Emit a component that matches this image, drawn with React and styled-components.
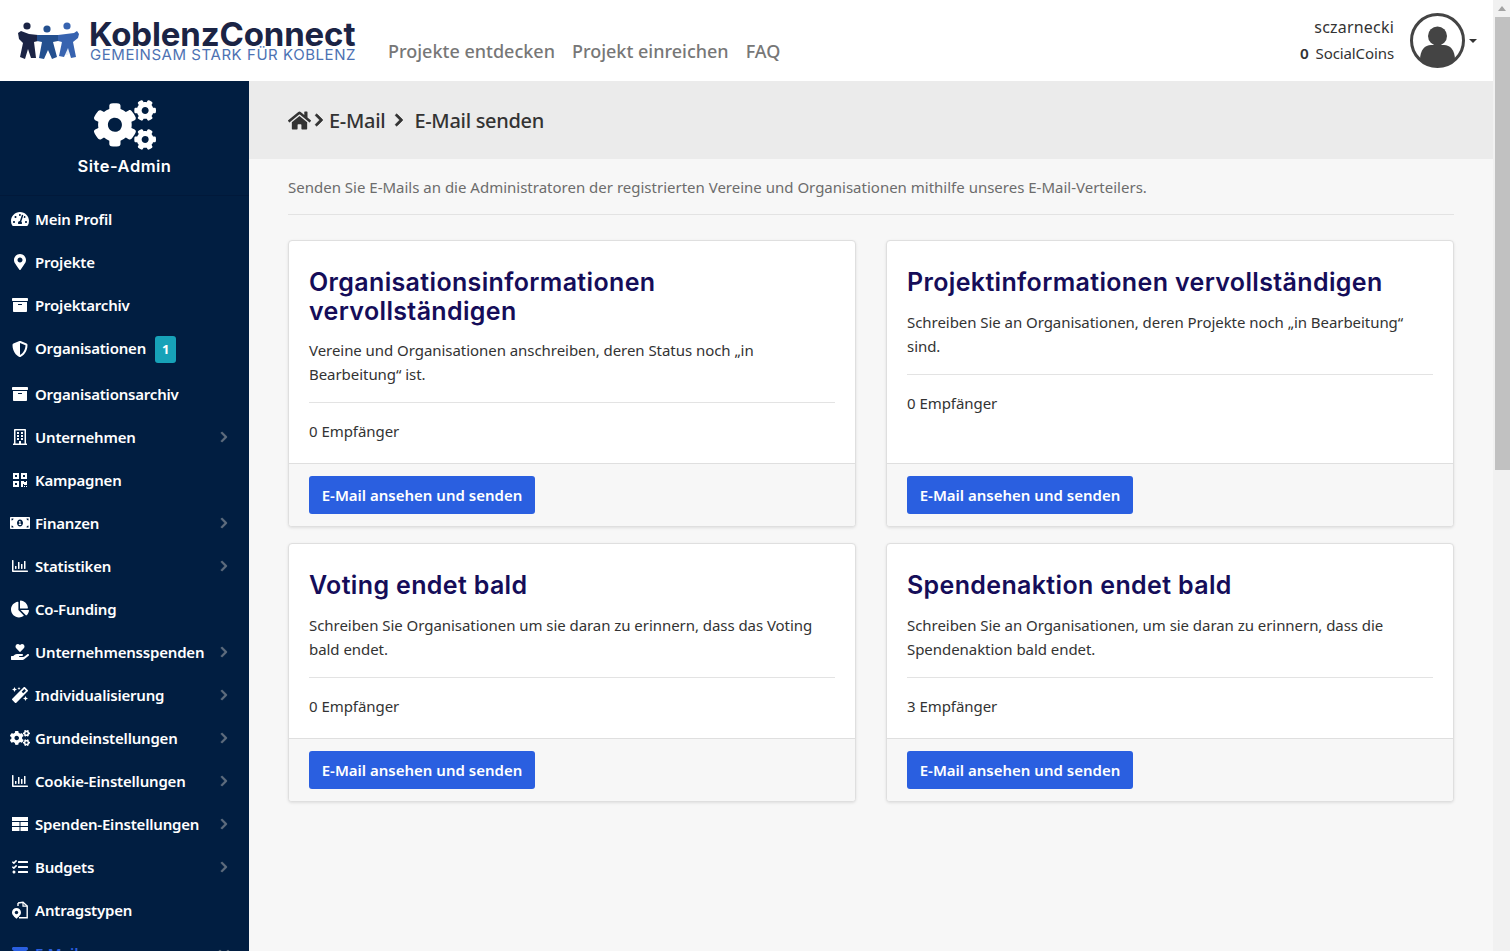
import styled, { createGlobalStyle } from 'styled-components';
import {
  FaArchive,
  FaChartPie,
  FaChevronDown,
  FaChevronRight,
  FaCogs,
  FaEnvelope,
  FaHandHoldingHeart,
  FaHome,
  FaMagic,
  FaMapMarkerAlt,
  FaMoneyBillAlt,
  FaQrcode,
  FaRegBuilding,
  FaRegChartBar,
  FaShieldAlt,
  FaTachometerAlt,
  FaTasks,
} from 'react-icons/fa';

const GlobalStyle = createGlobalStyle`
  html, body {
    margin: 0;
    padding: 0;
    height: 100%;
    overflow: hidden;
    background: #f7f7f7;
    font-family: "Noto Sans", "Open Sans", sans-serif;
  }
`;

const Page = styled.div`
  display: flex;
  width: 1510px;
  height: 951px;
  overflow: hidden;
`;

const Main = styled.div`
  flex: 1;
  min-width: 0;
  display: flex;
  flex-direction: column;
`;

const ScrollTrack = styled.div`
  width: 17px;
  flex-shrink: 0;
  background: #f1f1f1;
  display: flex;
  flex-direction: column;
  align-items: flex-end;
`;

const ScrollArrow = styled.div`
  width: 0;
  height: 0;
  align-self: center;
  margin: 6px 0 6px;
  border-left: 4px solid transparent;
  border-right: 4px solid transparent;
  border-bottom: 5px solid #a3a3a3;
`;

const ScrollThumb = styled.div`
  width: 15px;
  height: 453px;
  background: #c1c1c1;
`;

const Header = styled.header`
  height: 81px;
  flex-shrink: 0;
  background: #fff;
  display: flex;
  align-items: center;
  padding: 0 16px 0 17px;
  box-sizing: border-box;
`;

const LogoLink = styled.div`
  display: flex;
  align-items: center;
  gap: 10px;
  width: 371px;
  flex-shrink: 0;
  margin-top: -1px;
`;

const LogoText = styled.div`
  display: flex;
  flex-direction: column;
`;

const LogoName = styled.div`
  font-family: "Inter", sans-serif;
  font-weight: 700;
  font-size: 33px;
  line-height: 31px;
  letter-spacing: -0.15px;
  color: #1b2445;
`;

const LogoClaim = styled.div`
  font-family: "Inter", sans-serif;
  font-size: 15px;
  line-height: 12px;
  letter-spacing: 0.55px;
  white-space: nowrap;
  color: #4d72b3;
  margin: -1px 0 0 1px;
`;

const Nav = styled.nav`
  display: flex;
  gap: 17px;
  flex: 1;
  margin-top: 20px;
`;

const NavLink = styled.a`
  font-size: 18px;
  font-weight: 500;
  color: #777;
`;

const UserBox = styled.div`
  display: flex;
  align-items: center;
`;

const UserText = styled.div`
  text-align: right;
  font-size: 15px;
  line-height: 26px;
  letter-spacing: -0.1px;
  color: #333;
  margin: -1px 16px 0 0;
`;

const UserName = styled.div`
  font-size: 16px;
  letter-spacing: 0.2px;
`;

const Coins = styled.b`
  font-family: "Inter", sans-serif;
  font-weight: 700;
  font-size: 13px;
  margin-right: 3px;
`;

const Caret = styled.span`
  width: 0;
  height: 0;
  margin-left: 4px;
  border-left: 4px solid transparent;
  border-right: 4px solid transparent;
  border-top: 4px solid #333;
`;

const Body = styled.div`
  flex: 1;
  min-height: 0;
  display: flex;
`;

const Sidebar = styled.aside`
  width: 249px;
  flex-shrink: 0;
  background: #011e41;
  overflow: hidden;
`;

const SidebarHead = styled.div`
  height: 115px;
  box-sizing: border-box;
  border-bottom: 1px solid #01193a;
  padding-top: 13px;
  display: flex;
  flex-direction: column;
  align-items: center;
  color: #fff;
  font-size: 62px;
`;

const SidebarTitle = styled.div`
  font-family: "Inter", sans-serif;
  font-size: 16.5px;
  font-weight: 600;
  line-height: 22px;
  letter-spacing: 0.5px;
  margin-top: -1px;
`;

const Menu = styled.ul`
  list-style: none;
  margin: 0;
  padding: 1px 0 0;
`;

const MenuItem = styled.li`
  height: ${(props) => (props.$tall ? '46px' : '43px')};
  display: flex;
  align-items: center;
  padding: 0 19px 0 10px;
  font-size: 15px;
  font-weight: 600;
  letter-spacing: -0.2px;
  white-space: nowrap;
  color: ${(props) => (props.$active ? '#2a5fe0' : '#fff')};
`;

const MenuIcon = styled.span`
  width: 20px;
  margin-right: 5px;
  flex-shrink: 0;
  display: flex;
  justify-content: center;
  font-size: ${(props) => props.$size || 16}px;
`;

const MenuLabel = styled.span`
  flex: 1;
`;

const Badge = styled.span`
  display: inline-block;
  width: 21px;
  height: 27px;
  margin-left: 9px;
  border-radius: 3px;
  background: #17a2b8;
  color: #fff;
  font-size: 13px;
  font-weight: 700;
  line-height: 27px;
  text-align: center;
`;

const MenuArrow = styled.span`
  display: flex;
  color: #5f6d7e;
  font-size: 12px;

  svg {
    stroke: currentColor;
    stroke-width: 20;
  }
`;

const Content = styled.main`
  flex: 1;
  min-width: 0;
  background: #f7f7f7;
`;

const Breadcrumb = styled.div`
  height: 78px;
  box-sizing: border-box;
  padding: 0 39px;
  background: #ebebeb;
  display: flex;
  align-items: center;
  font-size: 20px;
  font-weight: 500;
  letter-spacing: -0.3px;
  color: #333;
`;

const CrumbArrow = styled.span`
  display: flex;
  font-size: 14px;
  margin: ${(props) => props.$margin};

  svg {
    stroke: currentColor;
    stroke-width: 30;
  }
`;

const Inner = styled.div`
  padding: 0 39px;
`;

const Intro = styled.p`
  margin: 0;
  padding: 17px 0 15px;
  border-bottom: 1px solid #e3e3e3;
  font-size: 15px;
  line-height: 23px;
  color: #6c6c6c;
`;

const CardGrid = styled.div`
  display: grid;
  grid-template-columns: 1fr 1fr;
  grid-template-rows: 287px 259px;
  column-gap: 30px;
  row-gap: 16px;
  margin-top: 25px;
`;

const Card = styled.section`
  display: flex;
  flex-direction: column;
  background: #fff;
  border: 1px solid #dfdfdf;
  border-radius: 4px;
  box-shadow: 0 1px 3px rgba(0, 0, 0, 0.1);
  overflow: hidden;
`;

const CardBody = styled.div`
  flex: 1;
  padding: 27px 20px 0;
`;

const CardTitle = styled.h3`
  margin: 0 0 12.8px;
  font-family: "Inter", sans-serif;
  font-size: 25px;
  font-weight: 600;
  line-height: 28.8px;
  letter-spacing: 0.35px;
  color: #150d59;
`;

const CardText = styled.p`
  margin: 0;
  font-size: 15px;
  line-height: 24px;
  letter-spacing: -0.05px;
  color: #333;
`;

const CardRule = styled.hr`
  margin: 16px 0;
  border: 0;
  border-top: 1px solid #e3e3e3;
`;

const CardFooter = styled.div`
  padding: 12px 20px;
  background: #f7f7f7;
  border-top: 1px solid #dfdfdf;
`;

const SendButton = styled.button`
  display: block;
  width: 226px;
  height: 38px;
  padding: 0;
  border: 0;
  border-radius: 3px;
  background: #2a5fe0;
  color: #fff;
  font-family: inherit;
  font-size: 15px;
  font-weight: 600;
`;

function LogoMark() {
  return (
    <svg width="62" height="40" viewBox="0 0 62 40">
      <path d="M44 21 L55 21 L51 35 L47 35 Z" fill="#e6eefa" />
      <g fill="#1b2445">
        <circle cx="10" cy="6" r="3.6" />
        <path d="M1 13 L4 11 L12 14 L21 15 L21 21 L17 22 L19 38 L14 38 L11 29 L8 39 L3 37 L6 23 L2 19 Z" />
      </g>
      <g fill="#24508f">
        <circle cx="30" cy="9" r="3.6" />
        <path d="M20 15 L41 15 L41 21 L36 22 L40 37 L35 39 L31 30 L27 39 L22 38 L25 22 L20 21 Z" />
      </g>
      <g fill="#3763b0">
        <circle cx="50" cy="6" r="3.6" />
        <path d="M41 15 L57 13 L60 11 L62 14 L61 18 L56 22 L59 37 L54 38 L51 28 L47 37 L42 36 L45 22 L41 21 Z" />
      </g>
    </svg>
  );
}

function AvatarIcon() {
  return (
    <svg width="55" height="55" viewBox="0 0 55 55">
      <circle cx="27.5" cy="27.5" r="26" fill="#fff" stroke="#444" strokeWidth="3" />
      <circle cx="27.5" cy="23" r="9.5" fill="#444" />
      <path d="M10 47 C10 37 15 32 21 32 L34 32 C40 32 45 37 45 47 C40 51 34 53 27.5 53 C21 53 15 51 10 47 Z" fill="#444" />
    </svg>
  );
}

function FilePinIcon() {
  return (
    <svg width="18" height="18" viewBox="0 0 18 18">
      <path d="M7 2 L12 1.2 L16.2 5 L16.2 16.8 L8 16.8 M7 2 L7 5" fill="none" stroke="#fff" strokeWidth="1.4" />
      <path d="M12 1 L12 5.2 L16.2 5.2" fill="none" stroke="#fff" strokeWidth="1.2" />
      <path d="M5.5 7 a4.5 4.5 0 0 1 4.5 4.5 c0 2.6 -3 5 -4.5 6.2 C4 16.5 1 14.1 1 11.5 A4.5 4.5 0 0 1 5.5 7 Z" fill="#fff" />
      <circle cx="5.5" cy="11.5" r="1.7" fill="#011e41" />
    </svg>
  );
}

function StripesIcon() {
  return (
    <svg width="16" height="14" viewBox="0 0 16 14" fill="#fff">
      <rect x="0" y="0" width="16" height="4" />
      <rect x="0" y="5" width="7.5" height="4" />
      <rect x="8.5" y="5" width="7.5" height="4" />
      <rect x="0" y="10" width="7.5" height="4" />
      <rect x="8.5" y="10" width="7.5" height="4" />
    </svg>
  );
}

const MENU = [
  { label: 'Mein Profil', icon: <FaTachometerAlt />, size: 18 },
  { label: 'Projekte', icon: <FaMapMarkerAlt /> },
  { label: 'Projektarchiv', icon: <FaArchive /> },
  { label: 'Organisationen', icon: <FaShieldAlt />, badge: 1 },
  { label: 'Organisationsarchiv', icon: <FaArchive /> },
  { label: 'Unternehmen', icon: <FaRegBuilding />, arrow: true },
  { label: 'Kampagnen', icon: <FaQrcode /> },
  { label: 'Finanzen', icon: <FaMoneyBillAlt />, size: 20, arrow: true },
  { label: 'Statistiken', icon: <FaRegChartBar />, arrow: true },
  { label: 'Co-Funding', icon: <FaChartPie />, size: 18 },
  { label: 'Unternehmensspenden', icon: <FaHandHoldingHeart />, size: 18, arrow: true },
  { label: 'Individualisierung', icon: <FaMagic />, arrow: true },
  { label: 'Grundeinstellungen', icon: <FaCogs />, size: 20, arrow: true },
  { label: 'Cookie-Einstellungen', icon: <FaRegChartBar />, arrow: true },
  { label: 'Spenden-Einstellungen', icon: <StripesIcon />, arrow: true },
  { label: 'Budgets', icon: <FaTasks />, arrow: true },
  { label: 'Antragstypen', icon: <FilePinIcon /> },
];

const CARDS = [
  {
    title: 'Organisationsinformationen vervollständigen',
    text: 'Vereine und Organisationen anschreiben, deren Status noch „in Bearbeitung“ ist.',
    count: 0,
  },
  {
    title: 'Projektinformationen vervollständigen',
    text: 'Schreiben Sie an Organisationen, deren Projekte noch „in Bearbeitung“ sind.',
    count: 0,
  },
  {
    title: 'Voting endet bald',
    text: 'Schreiben Sie Organisationen um sie daran zu erinnern, dass das Voting bald endet.',
    count: 0,
  },
  {
    title: 'Spendenaktion endet bald',
    text: 'Schreiben Sie an Organisationen, um sie daran zu erinnern, dass die Spendenaktion bald endet.',
    count: 3,
  },
];

export default function App() {
  return (
    <Page>
      <GlobalStyle />
      <Main>
        <Header>
          <LogoLink>
            <LogoMark />
            <LogoText>
              <LogoName>KoblenzConnect</LogoName>
              <LogoClaim>GEMEINSAM STARK FÜR KOBLENZ</LogoClaim>
            </LogoText>
          </LogoLink>
          <Nav>
            <NavLink>Projekte entdecken</NavLink>
            <NavLink>Projekt einreichen</NavLink>
            <NavLink>FAQ</NavLink>
          </Nav>
          <UserBox>
            <UserText>
              <UserName>sczarnecki</UserName>
              <div><Coins>0</Coins> SocialCoins</div>
            </UserText>
            <AvatarIcon />
            <Caret />
          </UserBox>
        </Header>
        <Body>
          <Sidebar>
            <SidebarHead>
              <FaCogs />
              <SidebarTitle>Site-Admin</SidebarTitle>
            </SidebarHead>
            <Menu>
              {MENU.map(({ label, icon, size, arrow, badge }) => (
                <MenuItem key={label} $tall={Boolean(badge)}>
                  <MenuIcon $size={size}>{icon}</MenuIcon>
                  <MenuLabel>
                    {label}
                    {badge && <Badge>{badge}</Badge>}
                  </MenuLabel>
                  {arrow && <MenuArrow><FaChevronRight /></MenuArrow>}
                </MenuItem>
              ))}
              <MenuItem $active>
                <MenuIcon><FaEnvelope /></MenuIcon>
                <MenuLabel>E-Mail</MenuLabel>
                <MenuArrow><FaChevronDown /></MenuArrow>
              </MenuItem>
            </Menu>
          </Sidebar>
          <Content>
            <Breadcrumb>
              <FaHome size={23} />
              <CrumbArrow $margin="0 3px 0 1px"><FaChevronRight /></CrumbArrow>
              E-Mail
              <CrumbArrow $margin="0 8px 0 7px"><FaChevronRight /></CrumbArrow>
              E-Mail senden
            </Breadcrumb>
            <Inner>
              <Intro>Senden Sie E-Mails an die Administratoren der registrierten Vereine und Organisationen mithilfe unseres E-Mail-Verteilers.</Intro>
              <CardGrid>
                {CARDS.map(({ title, text, count }) => (
                  <Card key={title}>
                    <CardBody>
                      <CardTitle>{title}</CardTitle>
                      <CardText>{text}</CardText>
                      <CardRule />
                      <CardText>{count} Empfänger</CardText>
                    </CardBody>
                    <CardFooter>
                      <SendButton>E-Mail ansehen und senden</SendButton>
                    </CardFooter>
                  </Card>
                ))}
              </CardGrid>
            </Inner>
          </Content>
        </Body>
      </Main>
      <ScrollTrack>
        <ScrollArrow />
        <ScrollThumb />
      </ScrollTrack>
    </Page>
  );
}
